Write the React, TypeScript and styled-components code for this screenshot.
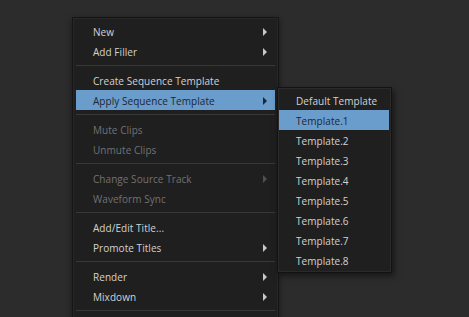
import React from 'react'
import styled, { createGlobalStyle } from 'styled-components'

const GlobalStyle = createGlobalStyle`
  html, body {
    margin: 0;
    padding: 0;
    background: #2c2c2c;
    overflow: hidden;
  }
  body {
    font-family: 'Open Sans', 'Noto Sans', 'DejaVu Sans', sans-serif;
  }
`

const Page = styled.div`
  width: 469px;
  height: 317px;
  padding: 17px 0 0 72px;
  box-sizing: border-box;
  background: #2c2c2c;
  overflow: hidden;
`

const Menu = styled.div`
  position: relative;
  width: 207px;
  box-sizing: border-box;
  padding: 3px;
  background: #1f1f1f;
  border: 1px solid #151515;
  box-shadow: inset 0 0 0 1px #272727, 0 2px 6px rgba(0, 0, 0, 0.45);
`

const SubMenu = styled.div`
  position: absolute;
  top: -3px;
  left: calc(100% + 2px);
  width: 115px;
  box-sizing: border-box;
  padding: 2px 2px 2px 1px;
  background: #1f1f1f;
  border: 1px solid #131313;
  box-shadow: inset 0 0 0 1px #2a2a2a, 2px 3px 6px rgba(0, 0, 0, 0.5);
  z-index: 2;
`

const Row = styled.div<{ $active?: boolean; $disabled?: boolean; $indent?: number }>`
  position: relative;
  display: flex;
  align-items: center;
  justify-content: space-between;
  box-sizing: border-box;
  height: 20px;
  padding: 2px 8px 0 ${(p) => p.$indent ?? 17}px;
  font-size: 10px;
  letter-spacing: 0.05px;
  white-space: nowrap;
  color: ${(p) => (p.$active ? '#1e2631' : p.$disabled ? '#727272' : '#d2d2d2')};
  background: ${(p) => (p.$active ? '#6a9ccc' : 'transparent')};
`

const Arrow = styled.span<{ $active?: boolean; $disabled?: boolean }>`
  width: 0;
  height: 0;
  border-top: 4px solid transparent;
  border-bottom: 4px solid transparent;
  border-left: 4px solid
    ${(p) => (p.$active ? '#1e2631' : p.$disabled ? '#505050' : '#c8c8c8')};
`

const Separator = styled.div`
  height: 9px;
  display: flex;
  align-items: center;
  &::after {
    content: '';
    flex: 1;
    height: 1px;
    background: #383838;
  }
`

type Item = {
  label: string
  sub?: boolean
  disabled?: boolean
  active?: boolean
}

const groups: Item[][] = [
  [
    { label: 'New', sub: true },
    { label: 'Add Filler', sub: true },
  ],
  [
    { label: 'Create Sequence Template' },
    { label: 'Apply Sequence Template', sub: true, active: true },
  ],
  [
    { label: 'Mute Clips', disabled: true },
    { label: 'Unmute Clips', disabled: true },
  ],
  [
    { label: 'Change Source Track', sub: true, disabled: true },
    { label: 'Waveform Sync', disabled: true },
  ],
  [
    { label: 'Add/Edit Title...' },
    { label: 'Promote Titles', sub: true },
  ],
  [
    { label: 'Render', sub: true },
    { label: 'Mixdown', sub: true },
  ],
]

const templates = [
  'Default Template',
  'Template.1',
  'Template.2',
  'Template.3',
  'Template.4',
  'Template.5',
  'Template.6',
  'Template.7',
  'Template.8',
]

const Templates: React.FC = () => (
  <SubMenu>
    {templates.map((t) => (
      <Row key={t} $active={t === 'Template.1'} $indent={17}>
        {t}
      </Row>
    ))}
  </SubMenu>
)

const App: React.FC = () => {
  return (
    <Page>
      <GlobalStyle />
      <Menu>
        {groups.map((group, gi) => (
          <React.Fragment key={gi}>
            {group.map((item) => (
              <Row key={item.label} $active={item.active} $disabled={item.disabled}>
                <span>{item.label}</span>
                {item.sub && <Arrow $active={item.active} $disabled={item.disabled} />}
                {item.active && <Templates />}
              </Row>
            ))}
            <Separator />
          </React.Fragment>
        ))}
      </Menu>
    </Page>
  )
}

export default App
